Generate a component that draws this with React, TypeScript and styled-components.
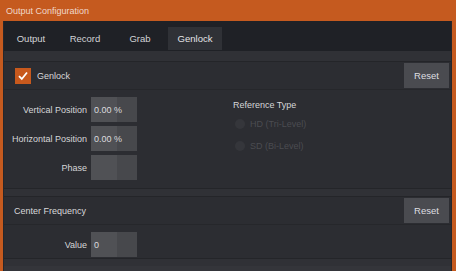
import React from "react";
import styled, { createGlobalStyle } from "styled-components";

const Global = createGlobalStyle`
  html, body { margin: 0; padding: 0; background: #c55a1f; }
  body { font-family: "Liberation Sans", Arial, sans-serif; }
`;

const Window = styled.div`
  width: 456px;
  height: 271px;
  background: #c55a1f;
  display: flex;
  flex-direction: column;
  overflow: hidden;
`;

const TitleBar = styled.div`
  height: 21px;
  flex: none;
  display: flex;
  align-items: center;
  padding-left: 6px;
  color: #f0d8ca;
  font-size: 9px;
`;

const Frame = styled.div`
  flex: 1;
  margin: 0 4px 0 3px;
  background: #303136;
  display: flex;
  flex-direction: column;
  border-left: 1px solid #26272b;
  border-right: 1px solid #26272b;
`;

const TabBar = styled.div`
  height: 30px;
  flex: none;
  background: #1f2126;
  display: flex;
  align-items: flex-end;
  padding-bottom: 1px;
  box-sizing: border-box;
`;

const Tab = styled.div<{ $active?: boolean; $w: number }>`
  width: ${(p) => p.$w}px;
  height: 23px;
  display: flex;
  align-items: center;
  justify-content: center;
  font-size: 9.5px;
  color: ${(p) => (p.$active ? "#e4e4e6" : "#d2d3d6")};
  background: ${(p) => (p.$active ? "#2f3136" : "transparent")};
`;

const Content = styled.div`
  flex: 1;
  padding-top: 10px;
  display: flex;
  flex-direction: column;
  gap: 7px;
`;

const Section = styled.div`
  border-top: 1px solid #242529;
  border-bottom: 1px solid #242529;
  background: #2c2d32;
`;

const Header = styled.div`
  height: 27px;
  display: flex;
  align-items: center;
  padding-left: 10px;
  padding-right: 2px;
  border-bottom: 1px solid #26272b;
  font-size: 9px;
  color: #d8d8da;
`;

const HeaderTitle = styled.span`
  flex: 1;
`;

const Check = styled.div`
  width: 16px;
  height: 16px;
  background: #c8591d;
  margin-left: 1px;
  margin-right: 6px;
  display: flex;
  align-items: center;
  justify-content: center;
`;

const ResetButton = styled.div`
  width: 45px;
  height: 25px;
  background: #4a4b50;
  color: #dedee0;
  font-size: 9.5px;
  display: flex;
  align-items: center;
  justify-content: center;
`;

const Body = styled.div<{ $h: number }>`
  height: ${(p) => p.$h}px;
  display: flex;
  padding-top: 7px;
  box-sizing: border-box;
`;

const FieldColumn = styled.div`
  width: 229px;
  display: flex;
  flex-direction: column;
  gap: 4px;
`;

const Row = styled.div`
  display: flex;
  align-items: center;
  gap: 4px;
`;

const Label = styled.div`
  width: 83px;
  text-align: right;
  font-size: 9px;
  color: #d6d6d8;
  white-space: nowrap;
`;

const Input = styled.div`
  width: 46px;
  height: 25px;
  background: linear-gradient(to right, #505155 0, #505155 26px, #47484c 26px);
  color: #dcdcde;
  font-size: 9px;
  display: flex;
  align-items: center;
  padding-left: 3px;
  box-sizing: border-box;
`;

const RefColumn = styled.div`
  display: flex;
  flex-direction: column;
`;

const RefLabel = styled.div`
  font-size: 9px;
  color: #d6d6d8;
  margin-top: 3px;
  margin-bottom: 3px;
`;

const Radio = styled.div`
  display: flex;
  align-items: center;
  gap: 5px;
  height: 22px;
  padding-left: 2px;
  font-size: 9px;
  color: #4b4c51;
`;

const RadioDot = styled.span`
  width: 10px;
  height: 10px;
  border-radius: 50%;
  background: #35363b;
`;

const Bottom = styled.div`
  flex: 1;
  background: #34353a;
`;

export default function App() {
  return (
    <>
      <Global />
      <Window>
        <TitleBar>Output Configuration</TitleBar>
        <Frame>
          <TabBar>
            <Tab $w={54}>Output</Tab>
            <Tab $w={54}>Record</Tab>
            <Tab $w={56}>Grab</Tab>
            <Tab $w={54} $active>Genlock</Tab>
          </TabBar>
          <Content>
            <Section>
              <Header>
                <Check>
                  <svg width="12" height="12" viewBox="0 0 12 12">
                    <path d="M2 6.2 L4.8 9 L10 2.5" fill="none" stroke="#fff" strokeWidth="1.8" />
                  </svg>
                </Check>
                <HeaderTitle>Genlock</HeaderTitle>
                <ResetButton>Reset</ResetButton>
              </Header>
              <Body $h={98}>
                <FieldColumn>
                  <Row>
                    <Label>Vertical Position</Label>
                    <Input>0.00 %</Input>
                  </Row>
                  <Row>
                    <Label>Horizontal Position</Label>
                    <Input>0.00 %</Input>
                  </Row>
                  <Row>
                    <Label>Phase</Label>
                    <Input />
                  </Row>
                </FieldColumn>
                <RefColumn>
                  <RefLabel>Reference Type</RefLabel>
                  <Radio>
                    <RadioDot />
                    HD (Tri-Level)
                  </Radio>
                  <Radio>
                    <RadioDot />
                    SD (Bi-Level)
                  </Radio>
                </RefColumn>
              </Body>
            </Section>
            <Section>
              <Header>
                <HeaderTitle>Center Frequency</HeaderTitle>
                <ResetButton>Reset</ResetButton>
              </Header>
              <Body $h={33}>
                <FieldColumn>
                  <Row>
                    <Label>Value</Label>
                    <Input>0</Input>
                  </Row>
                </FieldColumn>
              </Body>
            </Section>
            <Bottom />
          </Content>
        </Frame>
      </Window>
    </>
  );
}
